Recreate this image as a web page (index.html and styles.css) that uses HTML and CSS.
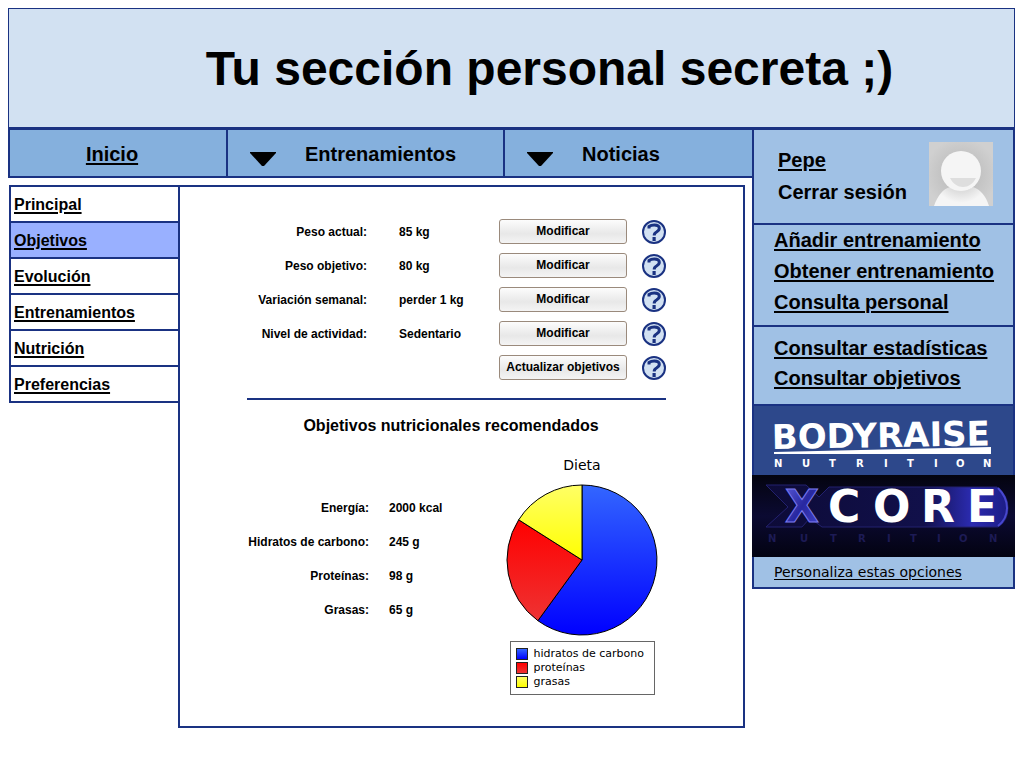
FILE: index.html
```html
<!DOCTYPE html>
<html lang="es">
<head>
<meta charset="utf-8">
<title>Tu sección personal</title>
<link rel="stylesheet" href="styles.css">
</head>
<body>
<header class="banner"><h1>Tu sección personal secreta ;)</h1></header>
<div class="page">
  <div class="left">
    <nav class="topnav">
      <a class="home" href="#">Inicio</a>
      <button class="drop" type="button"><svg class="arrow" viewBox="0 0 26 14"><path d="M0 0H26V1L14 14H12L0 1Z"/></svg>Entrenamientos</button>
      <button class="drop" type="button"><svg class="arrow" viewBox="0 0 26 14"><path d="M0 0H26V1L14 14H12L0 1Z"/></svg>Noticias</button>
    </nav>
    <div class="content">
      <nav class="menu">
        <a href="#">Principal</a>
        <a class="active" href="#">Objetivos</a>
        <a href="#">Evolución</a>
        <a href="#">Entrenamientos</a>
        <a href="#">Nutrición</a>
        <a href="#">Preferencias</a>
      </nav>
      <main class="panel">
        <section class="goals">
          <div class="row"><span class="label">Peso actual:</span><span>85 kg</span><button class="btn" type="button">Modificar</button><button class="help" type="button" aria-label="Ayuda"><svg viewBox="0 0 24 24"><use href="#q"/></svg></button></div>
          <div class="row"><span class="label">Peso objetivo:</span><span>80 kg</span><button class="btn" type="button">Modificar</button><button class="help" type="button" aria-label="Ayuda"><svg viewBox="0 0 24 24"><use href="#q"/></svg></button></div>
          <div class="row"><span class="label">Variación semanal:</span><span>perder 1 kg</span><button class="btn" type="button">Modificar</button><button class="help" type="button" aria-label="Ayuda"><svg viewBox="0 0 24 24"><use href="#q"/></svg></button></div>
          <div class="row"><span class="label">Nivel de actividad:</span><span>Sedentario</span><button class="btn" type="button">Modificar</button><button class="help" type="button" aria-label="Ayuda"><svg viewBox="0 0 24 24"><use href="#q"/></svg></button></div>
          <div class="row"><span></span><span></span><button class="btn" type="button">Actualizar objetivos</button><button class="help" type="button" aria-label="Ayuda"><svg viewBox="0 0 24 24"><use href="#q"/></svg></button></div>
        </section>
        <h2>Objetivos nutricionales recomendados</h2>
        <section class="diet">
          <dl class="facts">
            <dt>Energía:</dt><dd>2000 kcal</dd>
            <dt>Hidratos de carbono:</dt><dd>245 g</dd>
            <dt>Proteínas:</dt><dd>98 g</dd>
            <dt>Grasas:</dt><dd>65 g</dd>
          </dl>
          <figure class="chart">
            <figcaption>Dieta</figcaption>
            <svg class="pie" viewBox="-76 -76 152 152">
              <defs>
                <linearGradient id="blue" x2="0" y2="1"><stop stop-color="#3366ff"/><stop offset="1" stop-color="#0000ff"/></linearGradient>
                <linearGradient id="red" x2="0" y2="1"><stop stop-color="#ff0000"/><stop offset="1" stop-color="#ee3333"/></linearGradient>
                <linearGradient id="yellow" x2="0" y2="1"><stop stop-color="#ffff66"/><stop offset="1" stop-color="#ffff00"/></linearGradient>
              </defs>
              <g stroke="#000" stroke-width="1" stroke-linejoin="round">
                <path fill="url(#blue)" d="M0 0V-75A75 75 0 1 1 -44.1 60.7Z"/>
                <path fill="url(#red)" d="M0 0L-44.1 60.7A75 75 0 0 1 -63.3 -40.2Z"/>
                <path fill="url(#yellow)" d="M0 0L-63.3 -40.2A75 75 0 0 1 0 -75Z"/>
              </g>
            </svg>
            <ul class="legend">
              <li><i class="sw carbs"></i>hidratos de carbono</li>
              <li><i class="sw protein"></i>proteínas</li>
              <li><i class="sw fat"></i>grasas</li>
            </ul>
          </figure>
        </section>
      </main>
    </div>
  </div>
  <aside class="side">
    <section class="user">
      <div class="userlinks"><a href="#">Pepe</a><a class="plain" href="#">Cerrar sesión</a></div>
      <svg class="avatar" viewBox="0 0 64 64">
        <defs>
          <radialGradient id="bg" cx=".5" cy=".5" r=".7"><stop offset=".4" stop-color="#c2c2c2"/><stop offset=".8" stop-color="#d0d0d0"/></radialGradient>
          <radialGradient id="body" gradientUnits="userSpaceOnUse" cx="32" cy="32" r="36"><stop offset=".5" stop-color="#dedede"/><stop offset=".8" stop-color="#f5f5f5"/></radialGradient>
        </defs>
        <path fill="url(#bg)" d="M0 0H64V64H0Z"/>
        <path fill="url(#body)" d="M5 64C9 53 14 47 21 45Q32 53 44 45C52 48 57 54 60 64Z"/>
        <circle cx="32" cy="29" r="20" fill="#f5f5f5"/>
        <path fill="#dedede" d="M21 36H47C44 42 39 45 34 45S24 42 21 36Z"/>
      </svg>
    </section>
    <nav class="group actions"><a href="#">Añadir entrenamiento</a><a href="#">Obtener entrenamiento</a><a href="#">Consulta personal</a></nav>
    <nav class="group queries"><a href="#">Consultar estadísticas</a><a href="#">Consultar objetivos</a></nav>
    <a class="ad" href="#" aria-label="Bodyraise Nutrition">
      <svg viewBox="0 0 259 69">
        <path fill="#2d488b" d="M0 0H259V69H0Z"/>
        <text class="brand" font-size="34" x="18" y="43" transform="rotate(-1 20 43)">BODYRAISE</text>
        <path fill="#fff" d="M20 46L237 41V48H20Z"/>
        <text class="sub" x="20 48 75 102 130 153 180 202 229" y="61">NUTRITION</text>
      </svg>
    </a>
    <a class="ad wide" href="#" aria-label="Xcore Nutrition">
      <svg viewBox="0 0 263 82">
        <defs>
          <linearGradient id="night" x2="0" y2="1"><stop stop-color="#04040f"/><stop offset=".5" stop-color="#0b0a32"/><stop offset="1" stop-color="#030311"/></linearGradient>
          <linearGradient id="plate"><stop stop-color="#0d0b38"/><stop offset=".65" stop-color="#11104a"/><stop offset=".85" stop-color="#2b2bb0"/><stop offset="1" stop-color="#1c1c84"/></linearGradient>
          <linearGradient id="ice" x2="1" y2="1"><stop stop-color="#5c5cdb"/><stop offset=".5" stop-color="#2828a0"/><stop offset="1" stop-color="#4747cc"/></linearGradient>
        </defs>
        <path fill="url(#night)" d="M0 0H263V82H0Z"/>
        <path fill="url(#plate)" stroke="#23216f" d="M14 10H54L67 22L77 12H245Q256 20 256 33T246 52H70L58 43L50 52H14L36 32Z"/>
        <path fill="none" stroke="#4848cf" stroke-width="2" d="M246 13Q255 22 255 33T246 51"/>
        <text class="ice" x="33" y="47">X</text>
        <text class="brand" font-size="44" x="76 121 169 215" y="47">CORE</text>
        <text class="sub dim" x="16 48 78 106 135 158 185 207 237" y="67">NUTRITION</text>
      </svg>
    </a>
    <div class="custom"><a href="#">Personaliza estas opciones</a></div>
  </aside>
</div>
<svg class="defs" aria-hidden="true"><defs><g id="q"><circle cx="12" cy="12" r="11" fill="#d2e1f2" stroke="#1a3282" stroke-width="2"/><path d="M7 8.5V6.5Q9 5 12.3 5Q17.3 5 17.3 8.3Q17.3 10.3 14.5 12Q12.2 13.2 12.2 15.5" fill="none" stroke="#1a3282" stroke-width="3"/><path fill="#1a3282" d="M10.5 17H13.7V21H10.5Z"/></g></defs></svg>
</body>
</html>
```
FILE: styles.css
```css
* { box-sizing: border-box; }
body { margin: 8px 9px 8px 8px; background: #fff; color: #000; font: bold 12px "Liberation Sans", Arial, sans-serif; }
a { color: #000; text-decoration: underline; text-decoration-thickness: 2px; text-underline-offset: 2px; }
button { font: inherit; color: inherit; cursor: pointer; }
svg { display: block; }
.defs { width: 0; height: 0; }

.banner { height: 120px; padding-left: 76px; border: 1px solid #1a3282; background: #d2e1f2; display: flex; align-items: center; justify-content: center; }
h1 { margin: 0; font-size: 48px; }

.page { display: grid; grid-template-columns: 1fr 263px; align-items: start; }
.topnav { display: grid; grid-template-columns: 216fr 277fr 249fr; height: 50px; border: solid #1a3282; border-width: 2px 0 2px 2px; background: #85b0dd; font-size: 20px; }
.home { display: flex; align-items: center; justify-content: center; padding: 2px 12px 0 0; }
.drop { display: flex; align-items: center; gap: 29px; padding: 2px 22px 0; border: 0; border-left: 2px solid #1a3282; background: none; }
.arrow { width: 26px; height: 14px; margin-top: 10px; }

.content { display: flex; align-items: flex-start; padding: 7px 7px 0 1px; }
.menu { width: 169px; border: 2px solid #1a3282; border-right: 0; font-size: 16px; }
.menu a { display: block; height: 36px; line-height: 36px; padding-left: 3px; border-bottom: 2px solid #1a3282; }
.menu a:last-child { height: 34px; border-bottom: 0; }
.menu .active { background: #99b0ff; }

.panel { flex: 1; padding: 32px 77px 31px 67px; border: 2px solid #1a3282; }
.goals { display: grid; gap: 9px; padding-bottom: 18px; border-bottom: 2px solid #1a3282; }
.row { display: grid; grid-template-columns: 1fr 85px 128px 24px; column-gap: 15px; align-items: center; height: 25px; white-space: nowrap; }
.label { text-align: right; padding-right: 17px; }
.btn { height: 25px; padding: 0 0 2px; border: 1px solid #9a8a7c; border-radius: 3px; background: linear-gradient(#fcfcfc, #e8e8e8 60%, #f4f4f4); }
.help { align-self: end; width: 24px; height: 24px; padding: 0; border: 0; background: none; }
h2 { margin: 16px 11px 0 0; font-size: 16px; line-height: 20px; text-align: center; }
.diet { display: flex; justify-content: space-between; padding-top: 20px; }
.facts { display: grid; grid-template-columns: 122px auto; grid-auto-rows: 34px; column-gap: 20px; align-content: start; align-items: center; margin: 35px 0 0; white-space: nowrap; }
.facts dt { text-align: right; }
.facts dd { margin: 0; }
.chart { display: flex; flex-direction: column; align-items: center; margin: 0 8px 0 0; font-family: "DejaVu Sans", sans-serif; font-weight: normal; }
.chart figcaption { font-size: 14px; line-height: 18px; }
.pie { width: 152px; height: 152px; margin-top: 10px; }
.legend { margin: 5px 0 0; padding: 5px; width: 145px; border: 1px solid #666; list-style: none; font-size: 11px; line-height: 14px; white-space: nowrap; }
.legend li { display: flex; align-items: center; gap: 6px; }
.sw { width: 12px; height: 12px; border: 1px solid #222; }
.carbs { background: linear-gradient(#3366ff, #0000ff); }
.protein { background: linear-gradient(#ff0000, #ee3333); }
.fat { background: linear-gradient(#ffff66, #ffff00); }

.side { border: 2px solid #1a3282; background: #a0c1e5; font-size: 20px; }
.user { display: flex; justify-content: space-between; padding: 12px 20px 15px 24px; }
.userlinks { display: flex; flex-direction: column; align-items: flex-start; padding-top: 2px; line-height: 32px; }
.plain { text-decoration: none; }
.avatar { width: 64px; height: 64px; }
.group { display: flex; flex-direction: column; align-items: flex-start; padding-left: 20px; border-top: 2px solid #1a3282; }
.actions { padding-bottom: 7px; line-height: 31px; }
.queries { padding-top: 6px; padding-bottom: 11px; line-height: 30px; border-bottom: 2px solid #1a3282; }
.ad { display: block; }
.wide { margin: 0 -2px; }
.brand { font-family: "DejaVu Sans", sans-serif; font-weight: bold; fill: #fff; }
.ice { font: bold 44px "DejaVu Sans", sans-serif; fill: url(#ice); stroke: #7d7df0; stroke-width: 1px; }
.sub { font: bold 10px "DejaVu Sans", sans-serif; fill: #fff; }
.dim { fill: #1d1b55; }
.custom { height: 30px; padding-left: 20px; font-family: "DejaVu Sans", sans-serif; font-size: 14px; line-height: 30px; font-weight: normal; }
.custom a { text-decoration-thickness: 1px; }
```
